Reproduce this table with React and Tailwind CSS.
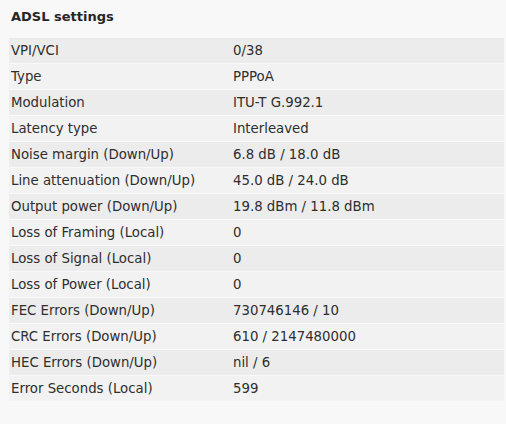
import React from "react";

const rows = [
  ["VPI/VCI", "0/38"],
  ["Type", "PPPoA"],
  ["Modulation", "ITU-T G.992.1"],
  ["Latency type", "Interleaved"],
  ["Noise margin (Down/Up)", "6.8 dB / 18.0 dB"],
  ["Line attenuation (Down/Up)", "45.0 dB / 24.0 dB"],
  ["Output power (Down/Up)", "19.8 dBm / 11.8 dBm"],
  ["Loss of Framing (Local)", "0"],
  ["Loss of Signal (Local)", "0"],
  ["Loss of Power (Local)", "0"],
  ["FEC Errors (Down/Up)", "730746146 / 10"],
  ["CRC Errors (Down/Up)", "610 / 2147480000"],
  ["HEC Errors (Down/Up)", "nil / 6"],
  ["Error Seconds (Local)", "599"],
];

const App = () => {
  return (
    <div
      className="w-[506px] h-[424px] bg-[#f8f8f8] text-[#2e2e2e] overflow-hidden"
      style={{ fontFamily: '"DejaVu Sans", Verdana, sans-serif' }}
    >
      {/* Header */}
      <h2 className="pl-[11px] pt-[8px] h-[38px] text-[13px] font-bold leading-[17px] text-[#262626]">
        ADSL settings
      </h2>

      {/* Settings table */}
      <div className="ml-[9px] mr-[2px] flex flex-col">
        {rows.map(([label, value], i) => (
          <div
            key={label}
            className={`flex h-[26px] items-center pt-[1px] border-b border-[#f9f9f9] text-[13.3px] ${
              i % 2 === 0 ? "bg-[#ececec]" : "bg-[#f2f2f2]"
            }`}
          >
            <div className="w-[224px] pl-[2px]">{label}</div>
            <div>{value}</div>
          </div>
        ))}
      </div>
    </div>
  );
};

export default App;
